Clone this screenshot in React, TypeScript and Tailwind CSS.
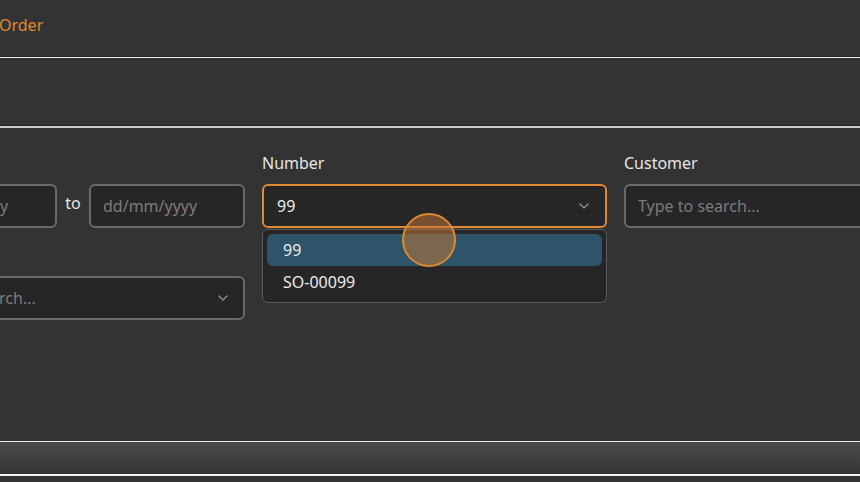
import React from 'react';

const font = { fontFamily: '"Noto Sans", "Open Sans", sans-serif' };

const Chevron: React.FC = () => (
  <svg className="w-4 h-4 text-[#8a8d92]" fill="none" stroke="currentColor" viewBox="0 0 24 24">
    <path strokeLinecap="round" strokeLinejoin="round" strokeWidth={2} d="M6 9l6 6 6-6" />
  </svg>
);

const App: React.FC = () => {
  return (
    <div className="w-[860px] h-[482px] overflow-hidden bg-[#333333] text-[#e6e6e6] flex flex-col" style={font}>
      {/* Header */}
      <div className="h-[57px] shrink-0 flex items-center border-b border-[#262626]">
        <span className="text-[16px] text-[#e0892d] -mt-[6px] -ml-px">Order</span>
      </div>
      <div className="h-px shrink-0 bg-[#f2f2f2]" />

      {/* Toolbar */}
      <div className="h-[68px] shrink-0 border-b border-[#262626]" />
      <div className="h-[2px] shrink-0 bg-[#c9c9c9]" />

      {/* Filters */}
      <div className="flex-1 min-h-0 pt-[25px]">
        <div className="flex gap-x-[17px] -ml-[100px]">
          <div className="w-[345px] shrink-0 flex flex-col">
            <label className="text-[16px] leading-5 mb-[11px] text-[#e6e6e6]">Date</label>
            <div className="flex items-center">
              <div className="w-[157px] h-[44px] rounded-md border-2 border-[#676a70] bg-[#262626] flex items-center px-3 text-[16px] text-[#7b7b7b]">
                dd/mm/yyyy
              </div>
              <span className="w-[32px] text-center text-[16px] -mt-[6px] text-[#e6e6e6]">to</span>
              <div className="w-[156px] h-[44px] rounded-md border-2 border-[#676a70] bg-[#262626] flex items-center px-3 text-[16px] text-[#7b7b7b]">
                dd/mm/yyyy
              </div>
            </div>
            <label className="text-[16px] leading-5 mt-[17px] mb-[11px]">Status</label>
            <div className="h-[44px] rounded-md border-2 border-[#676a70] bg-[#262626] flex items-center justify-between pl-3 pr-[12px] text-[16px] text-[#7b7b7b]">
              <span>Type to search...</span>
              <Chevron />
            </div>
          </div>

          <div className="w-[345px] shrink-0 flex flex-col">
            <label className="text-[16px] leading-5 mb-[11px]">Number</label>
            <div className="relative">
              <div className="h-[44px] rounded-md border-2 border-[#de8a32] bg-[#262626] flex items-center justify-between pl-[13px] pr-[13px] text-[16px] text-[#ececec]">
                <span>99</span>
                <Chevron />
              </div>
              <div className="absolute left-0 right-0 top-[45px] rounded-md border border-[#57595d] bg-[#262626] p-1 flex flex-col z-10">
                <div className="h-[32px] rounded-md bg-[#2d5468] flex items-center pl-4 text-[16px] text-[#ececec]">99</div>
                <div className="h-[32px] flex items-center pl-4 text-[16px] text-[#ececec]">SO-00099</div>
              </div>
              {/* touch indicator */}
              <div className="absolute left-[140px] top-[29px] w-[54px] h-[54px] rounded-full border-2 border-[#dc8834] bg-[#c97a33]/50 z-20" />
            </div>
          </div>

          <div className="w-[345px] shrink-0 flex flex-col">
            <label className="text-[16px] leading-5 mb-[11px]">Customer</label>
            <div className="h-[44px] rounded-md border-2 border-[#676a70] bg-[#262626] flex items-center px-3 text-[16px] text-[#7b7b7b]">
              Type to search...
            </div>
          </div>
        </div>
      </div>

      {/* Footer bar */}
      <div className="h-px shrink-0 bg-[#f2f2f2]" />
      <div className="h-[32px] shrink-0 bg-gradient-to-b from-[#4b4b4b] to-[#353535]" />
      <div className="h-[2px] shrink-0 bg-[#f2f2f2]" />
      <div className="h-[6px] shrink-0 bg-[#353535]" />
    </div>
  );
};

export default App;
